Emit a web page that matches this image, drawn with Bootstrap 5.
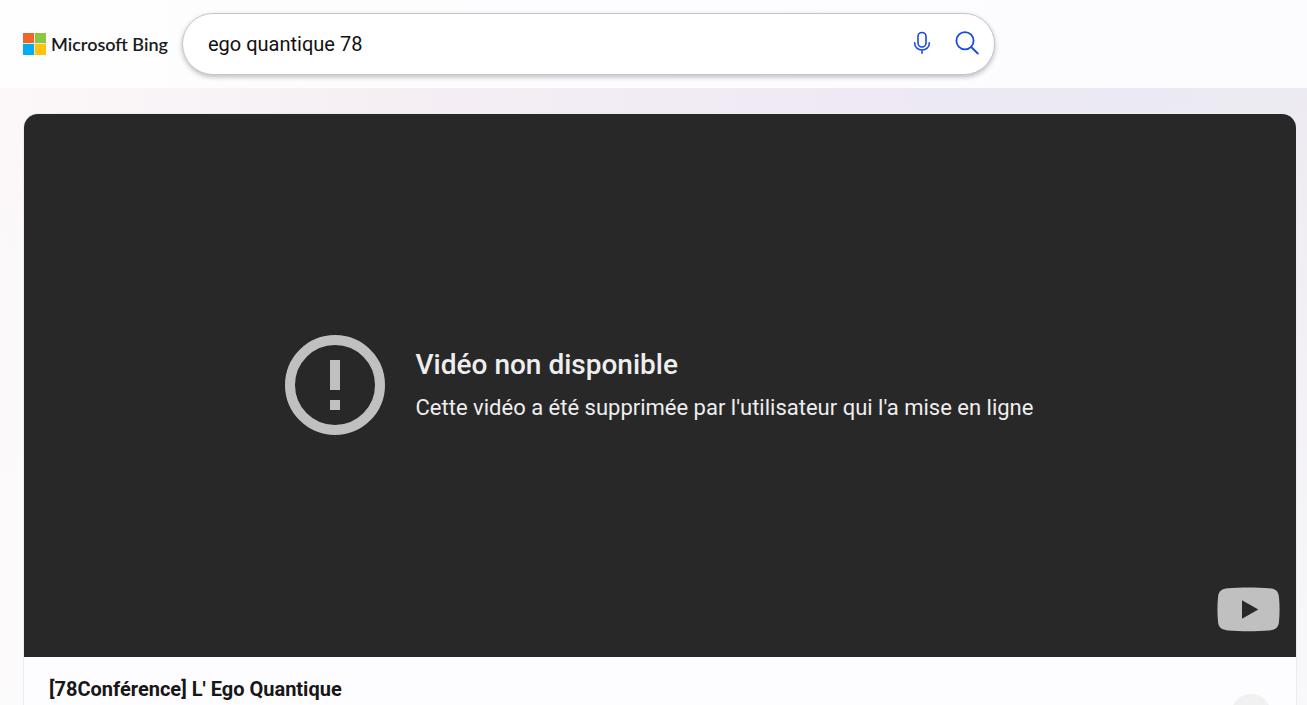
<!DOCTYPE html>
<html lang="fr">
<head>
<meta charset="utf-8">
<meta name="viewport" content="width=device-width, initial-scale=1">
<title>ego quantique 78 - Microsoft Bing</title>
<link href="https://cdn.jsdelivr.net/npm/bootstrap@5.3.0/dist/css/bootstrap.min.css" rel="stylesheet">
<style>
  body {
    font-family: Roboto, "Liberation Sans", sans-serif;
    background:
      linear-gradient(to bottom, transparent 88px, rgba(252, 251, 252, .8) 100%),
      linear-gradient(to right, #fcf8f9 0, #f5eff4 30%, #eee9f4 65%, #ebe9f3 88%, #edebf1 100%);
  }
  .top-bar { height: 88px; padding: 0 24px 0 23px; background: linear-gradient(to right, #fefefe, #fdfcfe 50%, #fcfcfe); }
  .brand { gap: 5px; width: 159px; color: #1b1b1b; font: 600 18px/24px Lato, "Open Sans", sans-serif; }
  .search-box { max-width: 813px; height: 62px; padding: 0 15px 0 25px; border: 1px solid #c6c6cf; box-shadow: 0 2px 5px rgba(0, 0, 0, .26); }
  .search-box input { font-size: 20px; line-height: 24px; color: #111; }
  .search-box input:focus { box-shadow: none; }
  .tool { width: 24px; height: 24px; }
  .tools { gap: 21px; margin-top: -3px; }
  .result { margin: 26px 11px 0 24px; border-radius: 14px 14px 0 0; background: #fdfcfe; box-shadow: 0 0 0 1px #ecebef; }
  .player { aspect-ratio: 1272 / 543; background: #282828; color: #eee; border-radius: 14px 14px 0 0; }
  .notice { gap: 31px; padding: 0 2px 2px 0; }
  .notice h1 { font-size: 28px; font-weight: 500; line-height: 34px; margin-bottom: 12px; }
  .notice p { font-size: 22px; line-height: 28px; }
  .yt-link { right: 16px; bottom: 25px; }
  .caption { padding: 20px 25px 40px; }
  .caption h2 { font-size: 20px; line-height: 24px; color: #171717; }
  .more { width: 40px; height: 40px; margin-top: 17px; background: #f1f1f2; }
</style>
</head>
<body class="vh-100 overflow-hidden">
<header class="top-bar d-flex align-items-center">
  <a href="#" class="brand d-flex align-items-center text-decoration-none text-nowrap flex-shrink-0">
    <svg class="flex-shrink-0" width="23" height="22" viewBox="0 0 23 22" aria-hidden="true">
      <rect width="23" height="22" fill="#e8e9dc"/>
      <path fill="#f26529" d="M0 0h11v10H0z"/><path fill="#8cc63f" d="M12 0h11v10H12z"/>
      <path fill="#00aeef" d="M0 11h11v11H0z"/><path fill="#ffc20e" d="M12 11h11v11H12z"/>
    </svg>
    <span>Microsoft Bing</span>
  </a>
  <form class="search-box d-flex align-items-center flex-grow-1 rounded-pill bg-white" role="search">
    <input type="text" class="form-control border-0 p-0 bg-transparent" aria-label="Rechercher" value="ego quantique 78">
    <div class="tools d-flex flex-shrink-0">
      <button type="button" class="tool btn p-0 border-0 d-flex" aria-label="Recherche vocale">
        <svg width="24" height="24" viewBox="0 0 24 24" fill="none" stroke="#174ae4" stroke-width="1.6" stroke-linecap="round">
          <rect x="8" y="1.500" width="8" height="14.500" rx="4"/><path d="M4.700 11.800v.7a7.300 6.500 0 0 0 14.600 0v-.7M12 19.200v3"/>
        </svg>
      </button>
      <button type="submit" class="tool btn p-0 border-0 d-flex" aria-label="Rechercher">
        <svg width="24" height="24" viewBox="0 0 24 24" fill="none" stroke="#174ae4" stroke-width="1.8" stroke-linecap="round">
          <circle cx="10" cy="9.800" r="8.600"/><path d="m16.200 16 6.600 6.500"/>
        </svg>
      </button>
    </div>
  </form>
</header>
<main class="result">
  <section class="player position-relative d-flex align-items-center justify-content-center">
    <div class="notice d-flex align-items-center">
      <svg class="flex-shrink-0" width="100" height="100" viewBox="0 0 100 100" fill="#c0c0c0" aria-hidden="true">
        <circle cx="50" cy="50" r="45" fill="none" stroke="#c0c0c0" stroke-width="10"/>
        <path d="M45 25h10v30H45zM45 65h10v10H45z"/>
      </svg>
      <div>
        <h1>Vidéo non disponible</h1>
        <p class="mb-0">Cette vidéo a été supprimée par l'utilisateur qui l'a mise en ligne</p>
      </div>
    </div>
    <a href="#" class="yt-link position-absolute d-flex" aria-label="YouTube">
      <svg width="63" height="45" viewBox="0 0 63 45">
        <path fill="#c0c0c0" d="M11 1.200C23 .2 40 .2 52 1.200c6 .5 9.200 2.500 9.900 8.300.9 8.500.9 17.500 0 26-.6 5-3.400 7.300-9.900 7.900-12 1.100-29 1.100-41 0-6.500-.6-9.300-2.900-9.900-7.900-.9-8.500-.9-17.500 0-26 .6-5.800 3.900-7.800 9.900-8.300z"/>
        <path fill="#282828" d="M25 13.300v18.500l16.300-9.200z"/>
      </svg>
    </a>
  </section>
  <div class="caption d-flex justify-content-between">
    <h2 class="fw-bold mb-0">[78Conférence] L' Ego Quantique</h2>
    <button type="button" class="more btn rounded-circle border-0 p-0 flex-shrink-0" aria-label="Plus d'options"></button>
  </div>
</main>
<script src="https://cdn.jsdelivr.net/npm/bootstrap@5.3.0/dist/js/bootstrap.bundle.min.js"></script>
</body>
</html>
